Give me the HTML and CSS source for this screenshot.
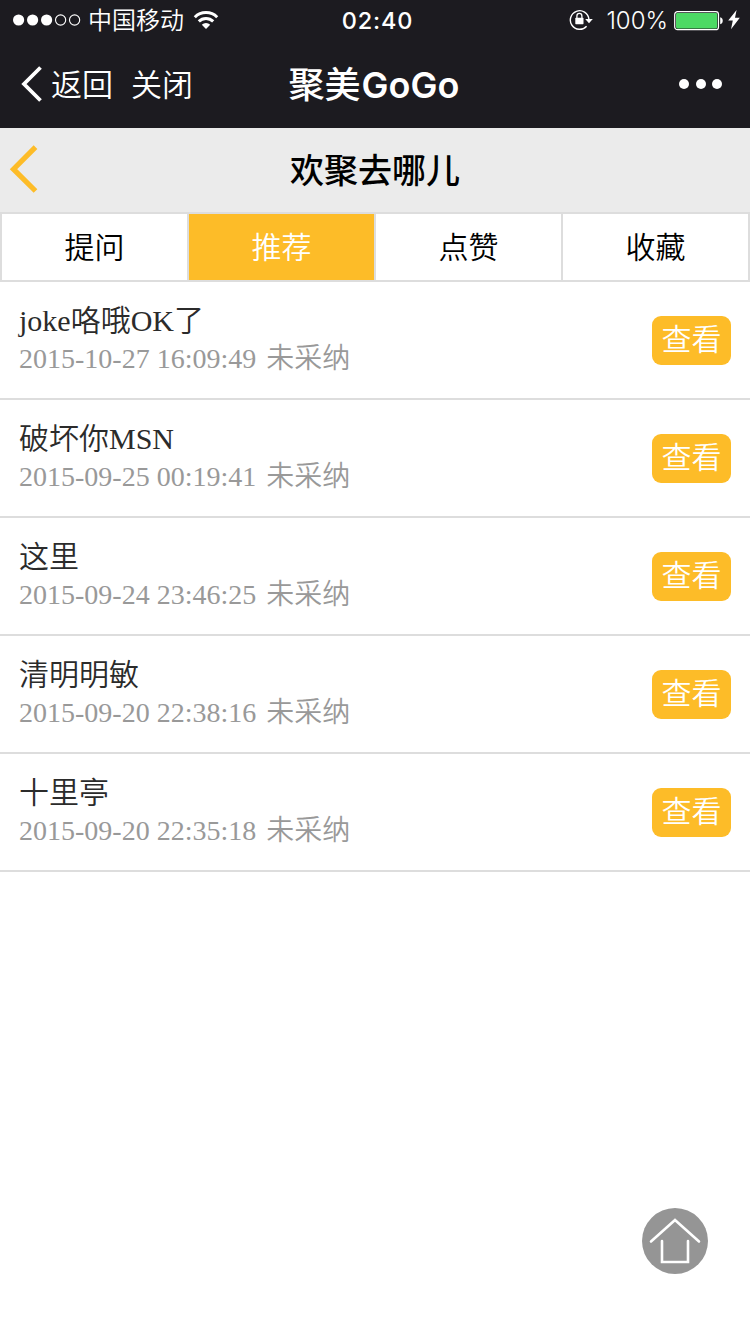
FILE: index.html
```
<!DOCTYPE html>
<html lang="zh-CN">
<head>
    <meta charset="UTF-8">
    <meta name="viewport" content="width=device-width, initial-scale=1.0">
    <title>聚美GoGo</title>
    <link rel="stylesheet" href="styles.css">
</head>
<body>
    <div class="status-bar">
        <div class="status-left">
            <svg class="signal" width="68" height="12" viewBox="0 0 68 12">
                <g fill="#fff">
                    <circle cx="5.6" cy="6" r="5.6"/>
                    <circle cx="19.6" cy="6" r="5.6"/>
                    <circle cx="33.6" cy="6" r="5.6"/>
                </g>
                <g fill="none" stroke="#fff" stroke-width="1.1">
                    <circle cx="47.6" cy="6" r="5.1"/>
                    <circle cx="61.6" cy="6" r="5.1"/>
                </g>
            </svg>
            <span class="carrier">中国移动</span>
            <svg class="wifi" width="26" height="20" viewBox="0 0 26 20">
                <g fill="none" stroke="#fff" stroke-width="3">
                    <path d="M1.8 7.2a15.8 15.8 0 0 1 22.4 0"/>
                    <path d="M5.8 11.4a10.2 10.2 0 0 1 14.4 0"/>
                </g>
                <path fill="#fff" d="M13 19l-4.2-4.3a6 6 0 0 1 8.4 0z"/>
            </svg>
        </div>
        <div class="clock">02:40</div>
        <div class="status-right">
            <svg class="lock" width="24" height="22" viewBox="0 0 24 22">
                <path fill="none" stroke="#fff" stroke-width="1.4" d="M17.6 17.2A9.3 9.3 0 1 1 19.9 10"/>
                <path fill="#fff" d="M16.2 10h7.6L20 14.2z"/>
                <rect x="6.3" y="8.8" width="8.2" height="6.4" rx=".6" fill="#fff"/>
                <path fill="none" stroke="#fff" stroke-width="1.3" d="M7.9 9.5V6.9a2.5 2.5 0 0 1 5 0v2.6"/>
            </svg>
            <span class="percent">100%</span>
            <svg class="battery" width="50" height="20" viewBox="0 0 50 20">
                <rect x=".7" y=".7" width="43.8" height="18" rx="2.8" fill="none" stroke="#fff" stroke-width="1.2"/>
                <rect x="2" y="2" width="41.2" height="15.4" rx="1.4" fill="#4cd964"/>
                <path fill="#fff" d="M46.2 6.2c3.4.6 3.4 6.4 0 7z"/>
            </svg>
            <svg class="bolt" width="12" height="20" viewBox="0 0 12 20">
                <path fill="#fff" d="M8.6 0L.2 10.6h4.6L3 19.2l8.8-11.4H7z"/>
            </svg>
        </div>
    </div>

    <div class="nav-bar">
        <div class="nav-left">
            <svg width="22" height="36" viewBox="0 0 22 36">
                <path fill="none" stroke="#fff" stroke-width="3.8" d="M20.5 1.5L4 18l16.5 16.5"/>
            </svg>
            <a href="#" class="nav-back">返回</a>
            <a href="#" class="nav-close">关闭</a>
        </div>
        <div class="nav-title">聚美<span>GoGo</span></div>
        <div class="nav-more"><i></i><i></i><i></i></div>
    </div>

    <div class="header">
        <a href="#" class="header-back">
            <svg width="30" height="50" viewBox="0 0 30 50">
                <path fill="none" stroke="#fdbc28" stroke-width="5.2" d="M27.5 2.2L5.5 24.2l22 21.8"/>
            </svg>
        </a>
        <h1>欢聚去哪儿</h1>
    </div>

    <ul class="tabs">
        <li>提问</li>
        <li class="active">推荐</li>
        <li>点赞</li>
        <li>收藏</li>
    </ul>

    <ul class="list">
        <li>
            <div class="info">
                <h2>joke咯哦OK了</h2>
                <p>2015-10-27 16:09:49 <span>未采纳</span></p>
            </div>
            <a href="#" class="btn">查看</a>
        </li>
        <li>
            <div class="info">
                <h2>破坏你MSN</h2>
                <p>2015-09-25 00:19:41 <span>未采纳</span></p>
            </div>
            <a href="#" class="btn">查看</a>
        </li>
        <li>
            <div class="info">
                <h2>这里</h2>
                <p>2015-09-24 23:46:25 <span>未采纳</span></p>
            </div>
            <a href="#" class="btn">查看</a>
        </li>
        <li>
            <div class="info">
                <h2>清明明敏</h2>
                <p>2015-09-20 22:38:16 <span>未采纳</span></p>
            </div>
            <a href="#" class="btn">查看</a>
        </li>
        <li>
            <div class="info">
                <h2>十里亭</h2>
                <p>2015-09-20 22:35:18 <span>未采纳</span></p>
            </div>
            <a href="#" class="btn">查看</a>
        </li>
    </ul>

    <a href="#" class="home-btn">
        <svg width="66" height="66" viewBox="0 0 66 66">
            <circle cx="33" cy="33" r="33" fill="#959595"/>
            <g fill="none" stroke="#fff" stroke-width="2.6" stroke-linecap="round">
                <path d="M9 33.5L33 12l24 21.5"/>
                <path d="M20 33v21h26V33"/>
            </g>
        </svg>
    </a>
</body>
</html>
```
FILE: styles.css
```
* {
    box-sizing: border-box;
}

body {
    margin: 0;
    min-height: 1334px;
    background-color: #fff;
    font-family: "Liberation Serif", "Noto Sans CJK SC", serif;
    color: #2b2b2b;
}

h1, h2, p, ul {
    margin: 0;
    padding: 0;
    font-weight: normal;
}

ul {
    list-style: none;
}

a {
    color: inherit;
    text-decoration: none;
}

svg {
    display: block;
}

/* phone status bar */
.status-bar {
    display: grid;
    grid-template-columns: 1fr auto 1fr;
    align-items: center;
    height: 40px;
    padding: 0 10px 0 13px;
    background-color: #1c1b20;
    color: #fff;
    font-family: Inter, "Noto Sans CJK SC", sans-serif;
    font-size: 24px;
    line-height: 40px;
}

.status-left,
.status-right {
    display: flex;
    align-items: center;
}

.status-right {
    justify-content: flex-end;
}

.carrier {
    margin: 0 9px 0 7px;
    padding-top: 2px;
    font-weight: 350;
    line-height: 38px;
}

.clock {
    padding: 2px 0 0 2px;
    font-size: 23.5px;
    font-weight: 500;
    letter-spacing: 0.8px;
    line-height: 38px;
}

.lock {
    margin-right: 13px;
}

.percent {
    margin-right: 6px;
    padding-top: 2px;
    font-weight: 300;
    line-height: 38px;
}

.battery {
    margin-top: 1px;
    margin-right: 4px;
}

/* webview navigation */
.nav-bar {
    display: grid;
    grid-template-columns: 1fr auto 1fr;
    align-items: center;
    height: 88px;
    padding: 0 28px 0 20px;
    background-color: #1c1b20;
    color: #fff;
    font-family: Inter, "Noto Sans CJK SC", sans-serif;
}

.nav-left {
    display: flex;
    align-items: center;
    font-size: 31px;
    font-weight: 350;
}

.nav-left a {
    padding-bottom: 4px;
}

.nav-back {
    margin: 0 18px 0 9px;
}

.nav-title {
    padding: 0 0 4px 6px;
    font-size: 36px;
    font-weight: 500;
}

.nav-title span {
    margin-left: 1px;
    font-weight: 600;
}

.nav-more {
    display: flex;
    justify-content: flex-end;
    gap: 6.5px;
}

.nav-more i {
    width: 10px;
    height: 10px;
    border-radius: 50%;
    background-color: #fff;
}

/* page header */
.header {
    display: grid;
    grid-template-columns: 1fr auto 1fr;
    align-items: center;
    height: 84px;
    padding: 0 8px;
    background-color: #ebebeb;
}

.header h1 {
    padding-bottom: 3px;
    color: #000;
    font-family: "Noto Sans CJK SC", sans-serif;
    font-size: 34px;
    font-weight: 500;
}

.tabs {
    display: flex;
    gap: 2px;
    height: 70px;
    padding: 2px;
    background-color: #ddd;
}

.tabs li {
    flex: 1;
    background-color: #fff;
    color: #000;
    font-family: "Noto Sans CJK SC", sans-serif;
    font-size: 30px;
    font-weight: 350;
    line-height: 62px;
    text-align: center;
}

.tabs .active {
    background-color: #fdbc28;
    color: #fff;
}

/* question list */
.list li {
    display: flex;
    align-items: center;
    justify-content: space-between;
    height: 118px;
    padding: 0 19px;
    border-bottom: 2px solid #ddd;
}

.info h2 {
    font-size: 30px;
    font-weight: 350;
    line-height: 38px;
}

.info p {
    color: #999;
    font-size: 28px;
    font-weight: 350;
    line-height: 38px;
}

.info span {
    margin-left: 3px;
}

.btn {
    width: 79px;
    height: 49px;
    border-radius: 9px;
    background-color: #fdbc28;
    color: #fff;
    font-family: "Noto Sans CJK SC", sans-serif;
    font-size: 30px;
    font-weight: 350;
    line-height: 43px;
    text-align: center;
}

.home-btn {
    position: fixed;
    right: 42px;
    bottom: 60px;
}
```
